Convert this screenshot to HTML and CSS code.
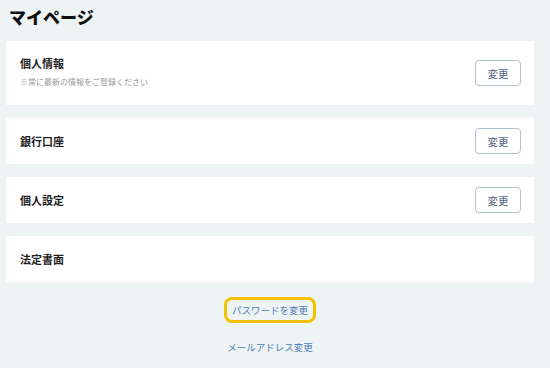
FILE: index.html
```
<!DOCTYPE html>
<html lang="ja">
<head>
<meta charset="utf-8">
<link rel="stylesheet" href="styles.css">
</head>
<body>
<div class="page">
  <h1 class="title">マイページ</h1>
  <div class="card card-tall">
    <div class="card-body">
      <div class="card-title">個人情報</div>
      <div class="card-sub">※常に最新の情報をご登録ください</div>
    </div>
    <button class="btn">変更</button>
  </div>
  <div class="card">
    <div class="card-title">銀行口座</div>
    <button class="btn">変更</button>
  </div>
  <div class="card">
    <div class="card-title">個人設定</div>
    <button class="btn">変更</button>
  </div>
  <div class="card">
    <div class="card-title">法定書面</div>
  </div>
  <div class="links">
    <a class="link link-focus" href="#">パスワードを変更</a>
    <a class="link link-plain" href="#">メールアドレス変更</a>
  </div>
</div>
</body>
</html>
```
FILE: styles.css
```
html, body {
  margin: 0;
  padding: 0;
  background: #eef3f4;
}
body {
  font-family: "Noto Sans CJK JP", "Noto Sans", sans-serif;
  color: #222;
}
.page {
  width: 528px;
  margin-left: 6px;
  display: flex;
  flex-direction: column;
}
.title {
  margin: 5px 0 12px 3px;
  font-size: 17px;
  line-height: 24px;
  font-weight: 900;
  color: #111;
}
.card {
  background: #fff;
  height: 46px;
  box-sizing: border-box;
  padding: 0 13px 0 14px;
  display: flex;
  align-items: center;
  justify-content: space-between;
  margin-bottom: 13px;
}
.card-tall {
  height: 64px;
  align-items: flex-start;
  padding-top: 14px;
}
.card-tall .btn {
  margin-top: 5px;
}
.card-title {
  font-size: 11px;
  line-height: 16px;
  font-weight: 700;
  color: #1d1d1d;
}
.card-sub {
  margin-top: 5px;
  font-size: 8px;
  line-height: 12px;
  color: #9a9a9a;
}
.btn {
  width: 46px;
  height: 26px;
  box-sizing: border-box;
  border: 1px solid #b3bfd3;
  border-radius: 4px;
  background: #fff;
  color: #56647f;
  font-family: "Noto Sans CJK JP", sans-serif;
  font-size: 10.5px;
  font-weight: 400;
  padding: 0;
}
.links {
  display: flex;
  flex-direction: column;
  align-items: center;
  margin-top: 2px;
}
.link {
  color: #4a7ab6;
  text-decoration: none;
  font-size: 9.5px;
  line-height: 14px;
}
.link-focus {
  border: 3px solid #f6c100;
  border-radius: 8px;
  padding: 3px 5px;
  line-height: 14px;
}
.link-plain {
  margin-top: 17px;
}
```
